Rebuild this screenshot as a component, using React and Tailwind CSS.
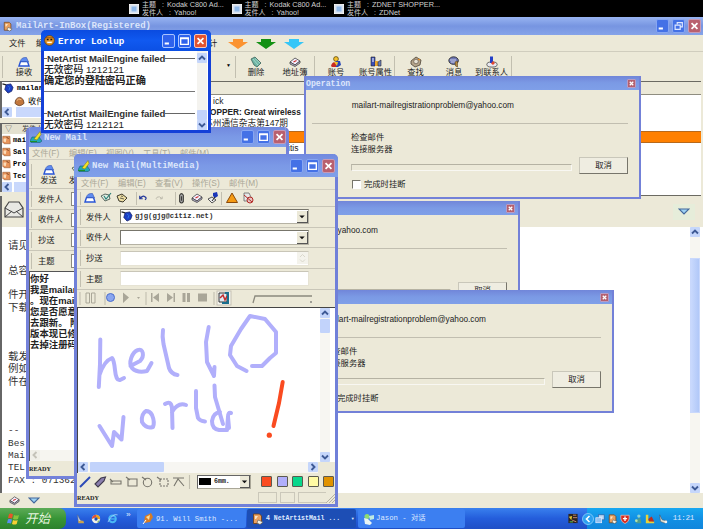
import React from "react";

const CJK = "font-['Liberation_Sans','Noto_Sans_CJK_SC',sans-serif]";
const MONO = "font-['Liberation_Mono','Noto_Sans_CJK_SC',monospace]";
const SERIF = "font-['Liberation_Serif','Noto_Sans_CJK_SC',serif]";

/* Small toolbar and tray glyphs, drawn on a 12x12 grid. */
const glyphs = {
  inbox: (
    <>
      <path d="M1 10 L2.5 5.5 H9.5 L11 10 Z" fill="#fff" stroke="#2a55d6" strokeWidth="1.4" />
      <path d="M2.5 5.5 Q3 1 8.5 1.5 L10.5 6 L8 5.5 Z" fill="#5f8cf0" stroke="#3454b4" strokeWidth=".6" />
    </>
  ),
  trash: (
    <>
      <path d="M1 3 L5 1 L11 7 L7 11 L4 9 Z" fill="#6fb5a5" stroke="#3b6259" strokeWidth=".8" />
      <path d="M3 3 L8 9 M5 2.5 L10 7" stroke="#b4ded2" strokeWidth=".8" />
    </>
  ),
  book: (
    <>
      <path d="M1 6 L6 2 L11 5 L6 9 Z" fill="#f4efff" stroke="#444" strokeWidth=".8" />
      <path d="M1 6 V8 L6 10.5 L11 7 V5 L6 9 Z" fill="#b9b5d0" stroke="#444" strokeWidth=".8" />
      <path d="M4.5 6 L7.5 4.5" stroke="#c9302c" strokeWidth="1.2" />
    </>
  ),
  user: (
    <>
      <circle cx="6" cy="3" r="2.4" fill="#f6c12c" stroke="#4a3900" strokeWidth=".7" />
      <path d="M1 10 Q2 5.5 6 6 V11 H2 Z" fill="#c92b22" />
      <path d="M6 5 H10 L11 9 L8 11 H6 Z" fill="#2746b8" />
      <path d="M4 6 L8 6 L7 10 Z" fill="#f6c12c" />
    </>
  ),
  userprops: (
    <>
      <path d="M1 1 H5 V10 H1 Z" fill="#3b4fb8" stroke="#222" strokeWidth=".6" />
      <path d="M5 5 H8 V10 H5 Z" fill="#e9a52c" />
      <path d="M8 10 V6 L11 4 V10 Z" fill="#6c7fb5" stroke="#223" strokeWidth=".6" />
      <path d="M2 3 H4 M2 5 H4" stroke="#fff" />
    </>
  ),
  find: (
    <>
      <path d="M1 5 L6 1 L11 4 L10 9 L5 11 L1 8 Z" fill="#b4a48a" stroke="#4b4335" strokeWidth=".8" />
      <circle cx="6" cy="5.5" r="2.3" fill="#e6e2d4" stroke="#66584a" strokeWidth=".7" />
      <path d="M8 3 L10 4" stroke="#e58b22" strokeWidth="1.3" />
    </>
  ),
  message: (
    <>
      <ellipse cx="5.6" cy="4.6" rx="4.8" ry="3.8" fill="#6f78b5" stroke="#222" strokeWidth=".8" />
      <path d="M2 4 H8 M3 6 H9" stroke="#dfe2f5" strokeWidth=".8" />
      <path d="M7 6 L9.5 5 V11 L7.5 10 Z" fill="#b98a3d" stroke="#443311" strokeWidth=".5" />
    </>
  ),
  contact: (
    <>
      <ellipse cx="6" cy="8.5" rx="5.2" ry="2.6" fill="#e8e8f0" stroke="#555" strokeWidth=".9" />
      <rect x="4" y="0.5" width="3" height="6.5" fill="#2440c8" />
      <path d="M7 5 L9 7 L7 9 L5 7.5 Z" fill="#e2462f" />
    </>
  ),
  globe: (
    <>
      <path d="M0 1 L4 2" stroke="#222" strokeWidth="1.4" />
      <path d="M4 2 L9 1 L11.5 5 L10 9 L6 11 L2.5 7 Z" fill="#1c3fc4" stroke="#0d1a60" strokeWidth=".8" />
      <path d="M6 3 L8 5 L7 8" fill="none" stroke="#2f7be8" strokeWidth="1" />
    </>
  ),
  orb: (
    <>
      <path d="M2 4 Q6 -1 10 4 L11 8 Q6 13 1 8 Z" fill="#c2783d" stroke="#5a3318" strokeWidth=".8" />
      <path d="M3 5 Q5 2 8 4" stroke="#f5cda0" fill="none" />
    </>
  ),
  page: (
    <>
      <path d="M1.5 1 H7.5 L9.5 3 V10.5 H1.5 Z" fill="#e9a060" stroke="#6d3c12" strokeWidth=".8" />
      <path d="M3 3 H6 L4 6 H3 Z" fill="#fbe4c4" />
      <path d="M6 7 L11 9 L8 11.5 L5 10 Z" fill="#f5f2e6" stroke="#555" strokeWidth=".6" />
    </>
  ),
  row: (
    <>
      <path d="M1 1 H10.5 L11 11 H3 L1 9 Z" fill="#e8935a" stroke="#8a4a20" strokeWidth=".7" />
      <path d="M2 4 H6 L5 9 L2 8 Z" fill="#fbdcb8" />
      <path d="M6 2.5 L9 4" stroke="#5a2b10" strokeWidth="1" />
    </>
  ),
  face: (
    <>
      <circle cx="6" cy="6" r="5.3" fill="#e79623" stroke="#69400c" strokeWidth=".9" />
      <path d="M3 5 H5 M7 5 H9" stroke="#20160a" strokeWidth="1.7" />
      <path d="M3.5 8 H8.5" stroke="#fff" strokeWidth="1.4" />
      <path d="M2 3 L10 3" stroke="#7a3c10" strokeWidth=".8" />
    </>
  ),
  pen: (
    <>
      <path d="M0 10 L2 6 H9 L12 10 L10 11.5 H1 Z" fill="#21a7b5" stroke="#0f515c" strokeWidth=".5" />
      <path d="M4 8 L10 0.5 L11 3.5 L7 9 Z" fill="#f4e324" stroke="#7a7416" strokeWidth=".5" />
      <path d="M0 10.5 H7" stroke="#1d8f2a" strokeWidth="1.2" />
    </>
  ),
  check: (
    <>
      <path d="M1 4 L5 9 L10 7 L9 3 L5 2 Z" fill="#dfeee2" stroke="#4c5a52" strokeWidth=".9" />
      <path d="M4 4 L6 7 L11 1" stroke="#247c74" strokeWidth="1.1" fill="none" />
    </>
  ),
  print: (
    <>
      <path d="M1 4 L6 2 L11 6 L7 10 L3 9 Z" fill="#f0e0a4" stroke="#3d3a2d" strokeWidth="1" />
      <path d="M4 6 L8 7 M5 4 L7 4.5" stroke="#6b6750" strokeWidth="1.2" />
    </>
  ),
  undo: <path d="M1 3 V7 H5 M1.5 6.5 Q5 2 8 4.5 Q11 6 8 8.5" fill="none" stroke="#24389b" strokeWidth="1.6" />,
  redo: <path d="M11 4 V7 H8 M10.5 6.5 Q7 3 4 5 Q2 7 4 8" fill="none" stroke="#b5b2a5" strokeWidth="1.1" />,
  clip: <path d="M4 9 V3 Q6 -.5 8 3 V10 Q6 13 4 10 Z M6 4 V9" fill="#aaa" stroke="#3b3b38" strokeWidth="1.2" />,
  sign: (
    <>
      <path d="M1 7 L5 5 L9 8 L5 11 Z" fill="#eee" stroke="#444" strokeWidth=".9" />
      <path d="M6 1 L10 0 L11 4 L8 6 L6 4 Z" fill="#1b37b8" />
      <path d="M5 9 L8 5" stroke="#222" />
    </>
  ),
  warn: <path d="M6 1 L11.5 10.5 H.5 Z" fill="#f59a12" stroke="#8b4a0a" strokeWidth="1" />,
  deny: (
    <>
      <path d="M2 1 H7 L9 5 V9 H2 Z" fill="#e8e8e8" stroke="#666" strokeWidth=".8" />
      <circle cx="8" cy="8" r="3" fill="#e9c3c0" stroke="#b12a26" strokeWidth="1" />
      <path d="M2 3 L10 10" stroke="#b12a26" strokeWidth="1" />
    </>
  ),
  monitor: (
    <>
      <rect x=".5" y=".5" width="11" height="11" fill="#d8e2f0" stroke="#fff" strokeWidth="1" />
      <rect x="3" y="3" width="6" height="6" fill="#8fb8e8" />
    </>
  ),
  broom: (
    <>
      <path d="M3 1 L4 9 L10 10 L6 7 Z" fill="#dfe4ea" stroke="#56698b" strokeWidth=".7" />
      <path d="M4 8 L10 8 L11 11 L4 11 Z" fill="#caa24f" />
    </>
  ),
  media: (
    <>
      <circle cx="6" cy="6" r="5" fill="#f3f0e6" />
      <path d="M6 1 A5 5 0 0 1 11 6 L8 6 L6 4 Z" fill="#eda11d" />
      <path d="M1 6 A5 5 0 0 1 6 1 L6 4 Z" fill="#e0503a" />
      <circle cx="6" cy="6" r="2" fill="#1b4eb0" />
      <path d="M8 9 L11 6 L8 11 Z" fill="#52a82f" />
    </>
  ),
  ie: (
    <>
      <circle cx="6" cy="6.4" r="3.7" fill="none" stroke="#49b8f5" strokeWidth="2" />
      <path d="M3 6.5 H9" stroke="#49b8f5" strokeWidth="1.4" />
      <path d="M1 10 Q6 0 11.5 2" fill="none" stroke="#b9e2fb" strokeWidth=".8" />
    </>
  ),
  chat: (
    <>
      <circle cx="4" cy="3.5" r="2.5" fill="#8ddc72" />
      <path d="M1 5 L5 6 L9 10 L7 12 L2 11 Z" fill="#e8f4f4" />
      <path d="M6 3 L11 2 L11 6 L7 7 Z" fill="#bfe9e2" />
    </>
  ),
  comet: (
    <>
      <path d="M3 3 L9 0 L11 4 L8 9 L2 10 Z" fill="#d87c24" />
      <path d="M4 4 L8 2 L7 7 Z" fill="#fbdc9a" />
      <path d="M1 11 L4 7" stroke="#fff" />
    </>
  ),
  shield: (
    <>
      <path d="M1 1.5 H11 V6 Q10 10 6 11.5 Q2 10 1 6 Z" fill="#d92b1f" stroke="#f0c7bb" strokeWidth=".8" />
      <path d="M6 3 V8.5 M3.5 5.5 H8.5" stroke="#fff" strokeWidth="1.6" />
    </>
  ),
  film: (
    <>
      <rect x="0.5" y="0.5" width="11" height="11" fill="#2b2320" />
      <path d="M1 4 L5 3 L4 8 Z" fill="#e2c735" />
      <path d="M6 2 H10 M6 5 H11 M5 8 L10 10" stroke="#cf8f73" strokeWidth="1.1" />
      <path d="M2 10 H6" stroke="#5ab24f" strokeWidth="1.4" />
    </>
  ),
  net: (
    <>
      <rect x="4" y="1" width="7" height="6" fill="#bcd9f6" stroke="#2d5a9b" strokeWidth=".8" />
      <rect x="1" y="4.5" width="7" height="6" fill="#8fc0f0" stroke="#eef" strokeWidth=".8" />
    </>
  ),
  buddy: (
    <>
      <circle cx="7" cy="2.5" r="2" fill="#8fd3cf" />
      <path d="M3 11 L6 5 H9 L10 11 Z" fill="#4f9d8e" />
      <circle cx="4" cy="8" r="1.6" fill="#b8e4a8" />
    </>
  ),
  alert: (
    <>
      <path d="M1 1 H4 V8 L11 9 V11 H1 Z" fill="#e8d33a" />
      <path d="M4 6 L8 3 L11 9 H5 Z" fill="#bd2d20" />
    </>
  ),
  phone: (
    <>
      <path d="M2 1 L5 7 L10 8 L8 11 L3 9 Z" fill="#e3e3d2" stroke="#3d556e" strokeWidth=".7" />
      <circle cx="9.5" cy="9.5" r="1.6" fill="#f0f0f0" />
    </>
  ),
};

function Icon({ name, className = "w-3 h-3" }) {
  return (
    <svg viewBox="0 0 12 12" className={`shrink-0 ${className}`}>
      {glyphs[name]}
    </svg>
  );
}

function WinButtons({ active, restore }) {
  const blue = active ? "bg-[#2f62ec] border-[#a9c3ff]" : "bg-[#4471e6] border-[#87a6f2]";
  const red = active ? "bg-[#e2532f] border-[#f7c8ba]" : "bg-[#b9606f] border-[#c79ab6]";
  const box = "w-[13px] h-[14px] rounded-[2px] border";
  return (
    <div className="flex gap-[3px] shrink-0">
      <svg viewBox="0 0 13 14" className={`${box} ${blue}`}><path d="M2 10 H7" stroke="#fff" strokeWidth="2.4" /></svg>
      <svg viewBox="0 0 13 14" className={`${box} ${blue}`}>
        {restore ? (
          <path d="M5 5 V3 H11 V8 H9 M2.5 6 H8.5 V11 H2.5 Z" fill="none" stroke="#dfe8ff" strokeWidth="1.4" />
        ) : (
          <path d="M2 3.5 H11 V11 H2 Z M2 4 H11" fill="none" stroke="#fff" strokeWidth="1.6" />
        )}
      </svg>
      <svg viewBox="0 0 13 14" className={`${box} ${red}`}><path d="M3 3.5 L10 10.5 M10 3.5 L3 10.5" stroke="#fff" strokeWidth="2" /></svg>
    </div>
  );
}

function ScrollBtn({ d = "up", faded }) {
  const paths = { up: "M2 6.5 L5 3.5 L8 6.5", down: "M2 3.5 L5 6.5 L8 3.5", left: "M6.5 2 L3.5 5 L6.5 8", right: "M3.5 2 L6.5 5 L3.5 8" };
  return (
    <svg viewBox="0 0 10 10" className={`w-[10px] h-[10px] shrink-0 rounded-[1px] ${faded ? "bg-[#f0efe8]" : "bg-[#c5d6fb]"}`}>
      <path d={paths[d]} fill="none" stroke={faded ? "#c4c2b8" : "#3e5a96"} strokeWidth="1.9" />
    </svg>
  );
}

function Toast({ a, b }) {
  return (
    <div className={`flex w-[102.5px] shrink-0 items-start gap-[3px] pt-px text-[7px] leading-[8px] text-[#d0d0d0] ${CJK}`}>
      <Icon name="monitor" className="mt-[3px] w-[10px] h-[10px]" />
      <div className="whitespace-nowrap">
        <div className="flex h-[8px]"><span className="w-[20px]">主题</span><span className="w-[5px]">:</span><span className="text-[7.300px]">{a}</span></div>
        <div className="flex h-[8px]"><span className="w-[27px]">发件人</span><span className="w-[5px]">:</span><span className="text-[7.300px]">{b}</span></div>
      </div>
    </div>
  );
}

function Tool({ icon, label, w }) {
  return (
    <div className={`flex shrink-0 flex-col items-center ${w}`}>
      <Icon name={icon} />
      <span className="whitespace-nowrap text-[8.3px] leading-[9px] text-[#222]">{label}</span>
    </div>
  );
}

const VSep = ({ h = "h-[22px]" }) => <div className={`w-px shrink-0 bg-[#c2bfb0] ${h}`} />;

const bodyLines = ["请见", "", "总容", "", "件开", "下载", "", "", "", "载发", "例如", "件在", "", "", "", "--", "Bes", "Mai", "TEL", "FAX : 071362"];

function MainWindow() {
  return (
    <div className={`flex h-[491px] w-[703px] flex-col bg-[#ece9d8] ${CJK}`}>
      <div className="flex h-[18px] shrink-0 items-center bg-linear-to-b from-[#98b4f1] via-[#7795e1] to-[#85a3e9] pl-[3px] pr-[2px]">
        <Icon name="page" className="w-[10px] h-[11px]" />
        <span className={`ml-[3px] flex-1 whitespace-nowrap pt-[2px] text-[9px] font-bold text-[#dbe5fb] ${MONO}`}>MailArt-InBox(Registered)</span>
        <WinButtons restore />
      </div>
      <div className="flex h-[17px] shrink-0 items-center border-b border-[#d0cdbe] pl-[9px] text-[8.3px] text-[#222]">
        <span className="w-[27px]">文件</span>
        <span className="w-[168px]">编辑</span>
        <span className="w-[24px] pl-[5px]">计</span>
        {["#fb9331", "#149014", "#35c6f7"].map((c) => (
          <svg key={c} viewBox="0 0 20 10" className="mr-[8px] mt-px h-[10px] w-[20px]"><path d="M5 0 H15 V3 H20 L10 10 L0 3 H5 Z" fill={c} /></svg>
        ))}
      </div>
      <div className="flex h-[29px] shrink-0 items-start pt-[4px]">
        <div className="flex w-[235px] items-start pl-[2px]">
          <VSep />
          <Tool icon="inbox" label="接收" w="w-[42px]" />
          <span className="ml-auto mr-[4px] pt-[6px] text-[5px]">▼</span>
        </div>
        <VSep />
        <Tool icon="trash" label="删除" w="w-[40px]" />
        <Tool icon="book" label="地址簿" w="w-[38px]" />
        <VSep />
        <Tool icon="user" label="账号" w="w-[42px]" />
        <Tool icon="userprops" label="账号属性" w="w-[37px]" />
        <VSep />
        <Tool icon="find" label="查找" w="w-[41px]" />
        <Tool icon="message" label="消息" w="w-[36px]" />
        <Tool icon="contact" label="到联系人" w="w-[39px]" />
        <VSep />
      </div>
      <div className="flex h-[115px] shrink-0">
        <div className="flex w-[204px] flex-col text-[8.3px]">
          <div className="flex h-[37px] flex-col border-l-2 border-t border-[#666] bg-white">
            <div className={`flex h-[13px] items-center gap-[3px] text-[7.200px] font-bold ${MONO}`}><Icon name="globe" className="h-[11px] w-[12px]" />mailart</div>
            <div className="flex h-[12px] items-center gap-[3px] pl-[12px]"><Icon name="orb" className="h-[11px] w-[11px]" />收件箱</div>
            <div className="flex"><ScrollBtn d="left" /><div className="ml-1 h-[10px] flex-1 bg-[#c9d8fc]" /></div>
          </div>
          <div className="mt-[5px] flex h-[69px] flex-col border-l-2 border-t border-[#666] bg-white">
            <div className="flex h-[10px] items-center bg-[#e4e1d0] pl-[3px] text-[7px] text-[#444]"><span className="w-[17px]">▽</span>发件人</div>
            {["mai", "Sal", "Pro", "Tec"].map((s) => (
              <div key={s} className={`flex h-[12px] items-center gap-[2px] text-[7.200px] font-bold ${MONO}`}><Icon name="row" className="h-[10px] w-[9px]" />{s}</div>
            ))}
            <div className="flex"><ScrollBtn d="left" /><div className="ml-[2px] h-[10px] flex-1 bg-[#c9d8fc]" /></div>
          </div>
        </div>
        <div className="mr-[2px] flex flex-1 flex-col border-y border-[#6b6a62] bg-white text-[8.5px] leading-[11px] text-[#222]">
          <div className="h-[13px] shrink-0 border-b border-[#8f8d80] bg-[#ece9d8]" />
          <div className="h-[36px] shrink-0 whitespace-nowrap pt-[1px]">
            <div className="pl-[9px]">ick</div>
            <div className="text-[8.3px] font-bold">HOPPER: Great wireless</div>
            <div className="text-[8.7px]">苏州通信杂志第147期</div>
          </div>
          <div className="h-[12px] shrink-0 border-y border-[#b8691a] bg-[#ff8000]" />
          <div className="pl-[84px]">itis</div>
        </div>
      </div>
      <div className="flex h-[31px] shrink-0 items-center justify-between border-l-2 border-[#666] pl-[2px] pr-[8px]">
        <svg viewBox="0 0 20 18" className="mb-[4px] h-[18px] w-[20px]">
          <path d="M1 7 L5 1 H15 L19 7 V16 H1 Z" fill="#e8e8e4" stroke="#444" strokeWidth="1.2" />
          <path d="M1 7 L10 12 L19 7 M1 16 L8 10 M19 16 L12 10" fill="none" stroke="#444" />
        </svg>
        <div className="bg-[#e6edda] px-[5px] py-[5px]">
          <svg viewBox="0 0 12 7" className="-mt-px h-[7px] w-[12px]"><path d="M1 1 H11 L6 6 Z" fill="#9ed2f3" stroke="#45699c" strokeWidth="1.2" /></svg>
        </div>
      </div>
      <div className="flex h-[266px] shrink-0 border-l-2 border-[#666] bg-white">
        <div className={`flex-1 whitespace-pre pl-[6px] pt-[13px] text-[10.5px] leading-[12.35px] text-[#333] ${SERIF}`}>
          {bodyLines.map((l, i) => (
            <div key={i} className={`h-[12.35px] ${i > 14 ? MONO + " text-[9.4px]" : ""}`}>{l}</div>
          ))}
        </div>
        <div className="mr-[3px] flex w-[10px] flex-col bg-[#f7f6f1]">
          <ScrollBtn d="up" />
          <div className="mt-[21px] h-[155px] border border-[#c9d8fc] bg-linear-to-r from-[#c9d9fd] to-[#b1c8f8]" />
          <div className="flex-1" />
          <ScrollBtn d="down" />
        </div>
      </div>
      <div className="flex flex-1 items-center gap-[8px] pl-[9px]">
        <Icon name="book" className="h-[11px] w-[11px]" />
        <svg viewBox="0 0 12 7" className="h-[7px] w-[12px]"><path d="M1 1 H11 L6 6 Z" fill="#9ed2f3" stroke="#45699c" strokeWidth="1.2" /></svg>
      </div>
    </div>
  );
}

function Operation({ place, title, textEnd }) {
  return (
    <div className={`absolute flex h-[123px] w-[337px] flex-col border-2 border-t-0 border-[#7381d8] bg-[#ece9d8] text-[8.3px] text-[#222] ${place} ${CJK}`}>
      <div className="flex h-[14px] shrink-0 items-center justify-between bg-linear-to-b from-[#7186d9] via-[#7b9ae5] to-[#7f9fe8] pr-[3px]">
        <span className={`pt-[2px] text-[8.2px] font-bold text-[#dde6fb] ${MONO}`}>{title}</span>
        <svg viewBox="0 0 10 10" className="h-[9px] w-[9px] rounded-[1px] border border-[#b99cc4] bg-[#b4606f]"><path d="M2.5 2.5 L7.5 7.5 M7.5 2.5 L2.5 7.5" stroke="#fff" strokeWidth="1.8" /></svg>
      </div>
      <div className={`flex h-[32px] shrink-0 items-center justify-end whitespace-nowrap pt-px text-[8.280px] ${textEnd}`}>mailart-mailregistrationproblem@yahoo.com</div>
      <div className="ml-[6px] mr-[11px] mt-px h-px shrink-0 bg-[#c1beb0]" />
      <div className="pl-[45px] pt-[8px] leading-[11.5px]">
        <div>检查邮件</div>
        <div>连接服务器</div>
      </div>
      <div className="flex items-center pl-[45px] pr-[11px] pt-[2px]">
        <div className="mt-[3px] h-[7px] w-[221px] border border-b-[#f8f7f2] border-l-[#bdbaac] border-r-[#f8f7f2] border-t-[#b5b2a3]" />
        <div className="ml-auto flex h-[17px] w-[49px] items-center justify-center border border-b-[#77756b] border-l-[#c9c7ba] border-r-[#77756b] border-t-[#c9c7ba] bg-[#efede1]">取消</div>
      </div>
      <div className="flex items-center gap-[3px] pl-[46px] pt-[4px]">
        <div className="h-[9px] w-[9px] border border-b-white border-l-[#77756b] border-r-white border-t-[#77756b] bg-white" />
        完成时挂断
      </div>
    </div>
  );
}

function ErrorWindow() {
  const Heading = () => (
    <div className="flex h-[11px] items-center font-bold">
      <div className="h-px w-[3px] bg-[#666]" />
      <span className="whitespace-nowrap text-[9.6px] tracking-[-0.12px] text-[#333]">NetArtist MailEngine failed</span>
      <div className="h-px flex-1 bg-[#666]" />
    </div>
  );
  return (
    <div className={`absolute left-[41px] top-[30px] flex h-[103px] w-[170px] flex-col rounded-t-[5px] border-[3px] border-t-0 border-[#1440d8] bg-white ${CJK}`}>
      <div className="-mx-[3px] flex h-[21px] shrink-0 items-center rounded-t-[5px] bg-linear-to-b from-[#0a4be0] via-[#1059f0] to-[#0c50e4] pl-[3px] pr-[4px]">
        <Icon name="face" className="h-[11px] w-[11px]" />
        <span className={`ml-[3px] flex-1 whitespace-nowrap pt-[2px] text-[9.2px] font-bold text-white ${MONO}`}>Error Loolup</span>
        <WinButtons active />
      </div>
      <div className="flex flex-1 overflow-hidden">
        <div className="flex-1 pt-[2px] text-[9.8px] leading-[11px] text-[#222]">
          <Heading />
          <div><span className="font-medium">无效密码</span> 1212121</div>
          <div className="whitespace-nowrap font-bold text-[10.2px]">确定您的登陆密码正确</div>
          <div className="mt-[5px] h-px bg-[#777]" />
          <div className="h-[16px]" />
          <Heading />
          <div><span className="font-medium">无效密码</span> 1212121</div>
        </div>
        <div className="ml-[2px] mr-px flex w-[10px] flex-col bg-[#f4f3ef] pt-[2px]">
          <ScrollBtn d="up" />
          <div className="mt-[47px] h-[13px] rounded-[1px] bg-[#c2d3fb]" />
          <div className="flex-1" />
          <ScrollBtn d="down" />
        </div>
      </div>
    </div>
  );
}

function MenuBar({ items, className }) {
  return (
    <div className={`flex shrink-0 items-center text-[8.3px] text-[#aaa797] ${className}`}>
      {items.map((m) => (
        <span key={m} className="w-[37px] whitespace-nowrap">{m}</span>
      ))}
    </div>
  );
}

function TitleBar({ title, className }) {
  return (
    <div className={`flex shrink-0 items-center rounded-t-[5px] bg-linear-to-b from-[#7189df] via-[#7b99e6] to-[#80a0e9] pl-[4px] pr-[3px] ${className}`}>
      <Icon name="pen" />
      <span className={`ml-[2px] flex-1 whitespace-nowrap pt-[3px] text-[9px] font-bold text-[#dce6fb] ${MONO}`}>{title}</span>
      <WinButtons />
    </div>
  );
}

function NewMail() {
  const text = ["你好", "我是mailart", "。现在mai", "您是否愿意", "去跟新。 附", "版本现已修", "去掉注册码"];
  return (
    <div className={`absolute left-[26px] top-[127px] flex h-[352px] w-[263px] flex-col overflow-hidden rounded-t-[5px] border-[3px] border-t-0 border-[#7482da] bg-[#ece9d8] text-[#222] ${CJK}`}>
      <TitleBar title="New Mail" className="-mx-[3px] h-[20px]" />
      <MenuBar items={["文件(F)", "编辑(E)", "视图(V)", "工具(T)", "邮件(M)"]} className="h-[13px] border-b border-[#d3d0c2] pl-[3px]" />
      <div className="flex h-[28px] shrink-0 items-start pl-[2px] pt-[4px]">
        <VSep />
        <Tool icon="inbox" label="发送" w="w-[33px]" />
        <Tool icon="check" label="发送" w="w-[24px]" />
      </div>
      {["发件人", "收件人", "抄送", "主题"].map((l) => (
        <div key={l} className="flex h-[20.7px] shrink-0 items-center border-t border-[#c9c6b8] pl-[2px]">
          <VSep h="h-[16px]" />
          <span className="w-[39px] pl-[6px] text-[8.3px]">{l}</span>
          <div className="h-[14px] w-[188px] border border-[#8c8a7d] bg-white" />
        </div>
      ))}
      <div className="flex h-[190px] shrink-0 flex-col border-l border-t border-[#555] bg-white">
        <div className="flex-1 whitespace-nowrap pt-px text-[9.4px] font-bold leading-[11.1px]">
          {text.map((t) => <div key={t}>{t}</div>)}
        </div>
        <div className="flex h-[11px] bg-[#f6f5f0]"><ScrollBtn d="left" faded /></div>
      </div>
      <div className={`flex flex-1 items-center pt-px text-[6.200px] font-bold ${SERIF}`}>READY</div>
    </div>
  );
}

function Field({ label, kind }) {
  return (
    <div className="flex h-[20.7px] shrink-0 items-center border-b border-[#c9c6b8] pl-[3px]">
      <VSep h="h-[16px]" />
      <span className="w-[39px] pl-[5px] text-[8.3px]">{label}</span>
      <div className={`flex h-[15px] w-[189px] items-center justify-between border bg-white ${kind === "plain" ? "border-[#e6e3d4] border-t-[#c9c6b8]" : "border-[#b5b2a4] border-l-[#77756b] border-t-[#77756b]"}`}>
        {label === "发件人" ? (
          <span className={`flex items-center gap-[2px] whitespace-nowrap text-[7.250px] font-bold text-[#333] ${MONO}`}><Icon name="globe" className="h-[11px] w-[12px]" />gjg(gjg@citiz.net)</span>
        ) : <span />}
        {kind !== "plain" && (
          <svg viewBox="0 0 11 12" className="h-[12px] w-[11px] border-b border-r border-[#555] bg-[#ece9d8]"><path d="M2.5 5 H8.5 L5.5 8 Z" fill="#111" /></svg>
        )}
        {label === "抄送" && (
          <svg viewBox="0 0 11 12" className="h-[12px] w-[11px] bg-[#f4f3ec]"><path d="M3 5 L5.5 2.5 L8 5 M3 7.5 L5.5 10 L8 7.5" fill="none" stroke="#dad8cc" /></svg>
        )}
      </div>
    </div>
  );
}

function Drawing() {
  return (
    <svg viewBox="78 308 240 153" className="h-[153px] w-[240px] shrink-0" fill="none" strokeWidth="4" strokeLinecap="round" strokeLinejoin="round">
      <g stroke="#b1affb">
        <path d="M100.3 339.5 L100 364 L98.8 387 M99.5 375 Q104 361 112 358 Q114 360 115 370 Q116 381 120 380 L124 378" />
        <path d="M130.5 366 L140 361 C145 356 143 348 138 350 C132 352 128 363 132 368 C137 373 143 372 147 371 L151.5 363" />
        <path d="M163 330 Q162 336 163.5 344 L169 368 Q171 374 177.5 375" />
        <path d="M208.7 327 L206 342 L207 362 L214 376 L214.5 367" />
        <path d="M246.5 371 L237 366 L230 355 L231 346 L241 329 L250 316 L265 319 L276 332 L276 353 L270 358 L262 366 L252 366" />
        <path d="M99.5 426 L112 446 L114 432 L121.5 439.5 L123.5 417" />
        <path d="M146 411 Q141 414 142 422 Q146 429 153 427 Q155 422 152 415 Q150 411 146 411" />
        <path d="M165 404 Q171 400 172 408 L172.5 428 M172 412 Q178 402 186 405" />
        <path d="M196 391 L196 408 L198 418 Q200 421 205 421.5" />
        <path d="M214.5 385.5 L215 397 L223 424 M220 412 Q213 413 212 421 Q212 429 219 430 L227 430 L228 417 Q228 412 231 413 M228 417 L229 428" />
      </g>
      <path d="M282.7 382 L279 403 L273.5 426" stroke="#fa4b20" />
      <circle cx="269.3" cy="435.2" r="2.6" fill="#fa4b20" />
    </svg>
  );
}

function MultiMediaMail() {
  return (
    <div className={`absolute left-[74px] top-[154px] flex h-[353px] w-[264px] flex-col rounded-t-[5px] border-[3px] border-t-0 border-[#7080d9] bg-[#ece9d8] text-[#222] ${CJK}`}>
      <TitleBar title="New Mail(MultiMedia)" className="-mx-[3px] h-[23px]" />
      <MenuBar items={["文件(F)", "编辑(E)", "查看(V)", "操作(S)", "邮件(M)"]} className="h-[13px] border-b border-[#d3d0c2] pl-[4px]" />
      <div className="flex h-[17px] shrink-0 items-center border-b border-[#c9c6b8] pl-[3px]">
        <VSep h="h-[13px]" />
        <div className="flex items-center gap-[4px] pl-[3px] pr-[8px]"><Icon name="inbox" className="w-[12px] h-[12px]" /><Icon name="check" className="w-[12px] h-[12px]" /><Icon name="print" className="w-[12px] h-[12px]" /></div>
        <VSep h="h-[13px]" />
        <div className="flex items-center gap-[6px] pl-[2px] pr-[12px]"><Icon name="undo" className="w-[9px] h-[10px]" /><Icon name="redo" className="w-[9px] h-[10px]" /></div>
        <VSep h="h-[13px]" />
        <div className="flex items-center gap-[4px] pr-[2px]"><Icon name="clip" className="w-[11px] h-[12px]" /><Icon name="book" className="w-[12px] h-[12px]" /><Icon name="sign" className="w-[12px] h-[12px]" /></div>
        <VSep h="h-[13px]" />
        <div className="flex items-center gap-[4px] pl-[4px]"><Icon name="warn" className="w-[12px] h-[12px]" /><Icon name="deny" className="w-[12px] h-[12px]" /></div>
      </div>
      <Field label="发件人" />
      <Field label="收件人" />
      <Field label="抄送" kind="plain" />
      <Field label="主题" kind="plain" />
      <div className="flex h-[17px] shrink-0 items-center">
        <svg viewBox="77 290 256 17" className="h-[17px] w-[256px]" fill="none">
          <path d="M80 292 V305 M105 292 V305 M146 292 V305 M214 292 V305" stroke="#bdbaab" />
          <path d="M86 293 H89.5 V303 H86 Z M91.500 293 H95 V303 H91.500 Z" stroke="#aaa798" />
          <circle cx="110.500" cy="297.500" r="4" fill="#8aa6ef" stroke="#4c6fcc" />
          <path d="M123 292.500 L129 297.500 L123 303 Z M151 293 h1.500 v9 h-1.500 Z M159 293 V302 L153 297.500 Z M167 293 L173 297.500 L167 302 Z M173.500 293 h1.500 v9 h-1.500 Z M182.500 293 h3 v9 h-3 Z M187 293 h3 v9 h-3 Z M198 293.500 h9 v8 h-9 Z M137 297 h3 l-1.500 2 Z" fill="#a9a698" />
          <rect x="217" y="291" width="14" height="14" fill="#f5f4ee" stroke="#c5c2b4" />
          <path d="M219 293 H227 V302 H219 Z" fill="#dce9f2" stroke="#333" />
          <path d="M220 298 L223 295 L225 300 L227 296" stroke="#c42c2c" strokeWidth="1.500" />
          <path d="M225 293 H228 V303 H222" stroke="#196e8e" strokeWidth="2" />
          <path d="M253 303 L255 296 H312" stroke="#8b897e" strokeWidth="1.300" />
          <path d="M311 301 V303" stroke="#555" />
        </svg>
      </div>
      <div className="flex h-[166px] shrink-0 flex-col border-l border-t border-[#444] bg-white">
        <div className="flex h-[154px] shrink-0 justify-between pr-[5px]">
          <Drawing />
          <div className="flex w-[10px] flex-col bg-[#f7f6f2]">
            <ScrollBtn d="up" />
            <div className="mt-px h-[14px] rounded-[1px] bg-[#c2d3fb]" />
            <div className="flex-1" />
            <ScrollBtn d="down" />
          </div>
        </div>
        <div className="flex h-[11px] shrink-0 bg-[#ece9d8]">
          <div className="flex w-[240px] bg-[#f7f6f2]">
            <ScrollBtn d="left" />
            <div className="ml-[2px] h-[10px] w-[74px] rounded-[1px] bg-[#c2d3fb]" />
            <div className="flex-1" />
            <ScrollBtn d="right" />
          </div>
        </div>
      </div>
      <div className="flex h-[18px] shrink-0 items-center overflow-hidden">
        <svg viewBox="77 473 114 18" className="h-[18px] w-[114px] shrink-0" fill="none" stroke="#77756c" strokeWidth="1.100">
          <path d="M80 487 L90 477" stroke="#2c4ab8" strokeWidth="2" />
          <path d="M95 484 L101 478 L105.500 477 L104 481 L98 487 Z" fill="#8b7fae" stroke="#3f3a4c" />
          <path d="M111 481 H121 V484 H111 Z M110 479 L113 482" />
          <path d="M128 479 H137 V486 H128 Z M126 477 L130 480" />
          <circle cx="147.500" cy="482.500" r="4.200" /><path d="M142 477 L146 480" />
          <path d="M160 479 H168 V486 H160 Z" strokeDasharray="2 1" /><path d="M157 477 L161 480" />
          <path d="M174 486 L178 479 L184 486 M173 478 L184 478" />
          <path d="M189.500 475 V489" stroke="#c2bfb0" />
        </svg>
        <div className="ml-[6px] flex h-[14px] w-[54px] shrink-0 items-center border border-[#aaa798] border-l-[#666] border-t-[#666] bg-white">
          <div className="ml-px h-[7px] w-[12px] bg-black" />
          <span className={`ml-[3px] flex-1 text-[6.600px] font-bold ${MONO}`}>6mm.</span>
          <svg viewBox="0 0 10 12" className="h-[12px] w-[10px] border-b border-r border-[#555] bg-[#ece9d8]"><path d="M2 5 H8 L5 8 Z" fill="#111" /></svg>
        </div>
        <div className="flex shrink-0 gap-[4.500px] pl-[10px]">
          {["bg-[#fa4b20]", "bg-[#b1affb]", "bg-[#08d78b]", "bg-[#fffaa4]", "bg-[#e19200]"].map((c) => (
            <div key={c} className={`h-[11px] w-[11px] rounded-[1px] border border-[#5b5a50] ${c}`} />
          ))}
        </div>
      </div>
      <div className={`flex flex-1 items-center pt-px text-[6.200px] font-bold ${SERIF}`}>
        <span className="w-[181px]">READY</span>
        <div className="h-[11px] w-[19px] border border-[#cbc8ba]" />
        <div className="ml-[3px] h-[11px] w-[15px] border border-[#cbc8ba]" />
        <div className="ml-[3px] h-[11px] w-[28px] border border-r-0 border-[#cbc8ba]" />
        <svg viewBox="0 0 9 10" className="h-[10px] w-[9px]"><path d="M0 10 L9 1 M3 10 L9 4 M6 10 L9 7" stroke="#b5b2a3" /></svg>
      </div>
    </div>
  );
}

function Taskbar() {
  const task = "flex h-[19px] shrink-0 items-center whitespace-nowrap rounded-[2px] pl-[5px] text-[8.100px]";
  return (
    <div className={`flex h-[21px] w-[703px] items-center bg-linear-to-b from-[#3a80ee] via-[#245ddb] to-[#1f4fc6] text-[#dfe9ff] ${MONO}`}>
      <div className="flex h-full w-[66px] shrink-0 items-center gap-[5px] rounded-r-[7px] bg-linear-to-b from-[#5cab57] via-[#389536] to-[#2d822d] pl-[7px]">
        <svg viewBox="0 0 13 12" className="h-[12px] w-[13px]">
          <path d="M2 1 Q4 0 6 1.500 L5 5.500 Q3 4.500 1 5.300 Z" fill="#e8552a" />
          <path d="M7 2 Q9.500 3 12 2 L11 6 Q8.500 7 6 6 Z" fill="#84c43c" />
          <path d="M1 6.300 Q3 5.500 5 6.500 L4 10.500 Q2 9.500 0 10.300 Z" fill="#5a8ef0" />
          <path d="M6 7 Q8.500 8 10.700 7 L9.700 11 Q7.500 12 5 11 Z" fill="#f7cf35" />
        </svg>
        <span className={`text-[12.500px] italic leading-[14px] text-[#e5f3df] ${CJK}`}>开始</span>
      </div>
      <div className="flex w-[71px] shrink-0 items-center gap-[6px] pl-[9px]">
        <Icon name="broom" className="h-[10px] w-[10px]" />
        <Icon name="media" className="h-[10px] w-[10px]" />
        <Icon name="ie" className="h-[11px] w-[11px]" />
        <span className="-mt-[7px] pl-[2px] text-[8px]">»</span>
      </div>
      <div className={`${task} w-[109px] bg-[#3c7ff1]`}><Icon name="comet" /><span className="ml-[2px] pt-px text-[7.200px]">91. Will Smith -...</span></div>
      <div className={`${task} ml-px w-[109px] bg-[#1d4eb5]`}><Icon name="page" /><span className="ml-[2px] flex-1 pt-px text-[6.500px] font-bold">4 NetArtistMail ...</span><span className="pr-[2px] text-[4px]">▼</span></div>
      <div className={`${task} ml-[2px] w-[107px] bg-[#3c7ff1]`}><Icon name="chat" /><span className="ml-px text-[7.300px]">Jason - 对话</span></div>
      <div className="flex flex-1 justify-end pr-[9px]"><Icon name="film" className="h-[11px] w-[10px]" /></div>
      <div className="flex h-full w-[116px] shrink-0 items-center bg-linear-to-b from-[#19a8f0] via-[#1290e4] to-[#1186dc]">
        <svg viewBox="0 0 12 12" className="-ml-[5px] h-[12px] w-[12px]"><circle cx="6" cy="6" r="5.500" fill="#2ba0f0" stroke="#8fd2fb" strokeWidth=".8" /><path d="M7.500 3 L4.500 6 L7.500 9" fill="none" stroke="#fff" strokeWidth="1.600" /></svg>
        <div className="flex items-center gap-[2.600px] pl-[1px]">
          {["net", "page", "shield", "buddy", "alert", "phone"].map((n) => <Icon key={n} name={n} className="h-[10px] w-[10px]" />)}
        </div>
        <span className="ml-auto pr-[9px] text-[7.600px] tracking-[-0.300px]">11:21</span>
      </div>
    </div>
  );
}

export default function App() {
  return (
    <div className="relative flex h-[529px] w-[703px] flex-col overflow-hidden bg-black">
      <div className="flex h-[17px] shrink-0 overflow-hidden pl-[129px]">
        <Toast a="Kodak C800 Ad..." b="Yahoo!" />
        <Toast a="Kodak C800 Ad..." b="Yahoo!" />
        <Toast a="ZDNET SHOPPER..." b="ZDNet" />
      </div>
      <MainWindow />
      <Operation place="left-[183px] top-[201px]" title="Operation" textEnd="pr-[140px]" />
      <Operation place="left-[304px] top-[76px]" title="Operation" textEnd="pr-[125px]" />
      <Operation place="left-[277px] top-[290px]" title="Operation" textEnd="pr-[126px]" />
      <NewMail />
      <ErrorWindow />
      <MultiMediaMail />
      <Taskbar />
    </div>
  );
}
